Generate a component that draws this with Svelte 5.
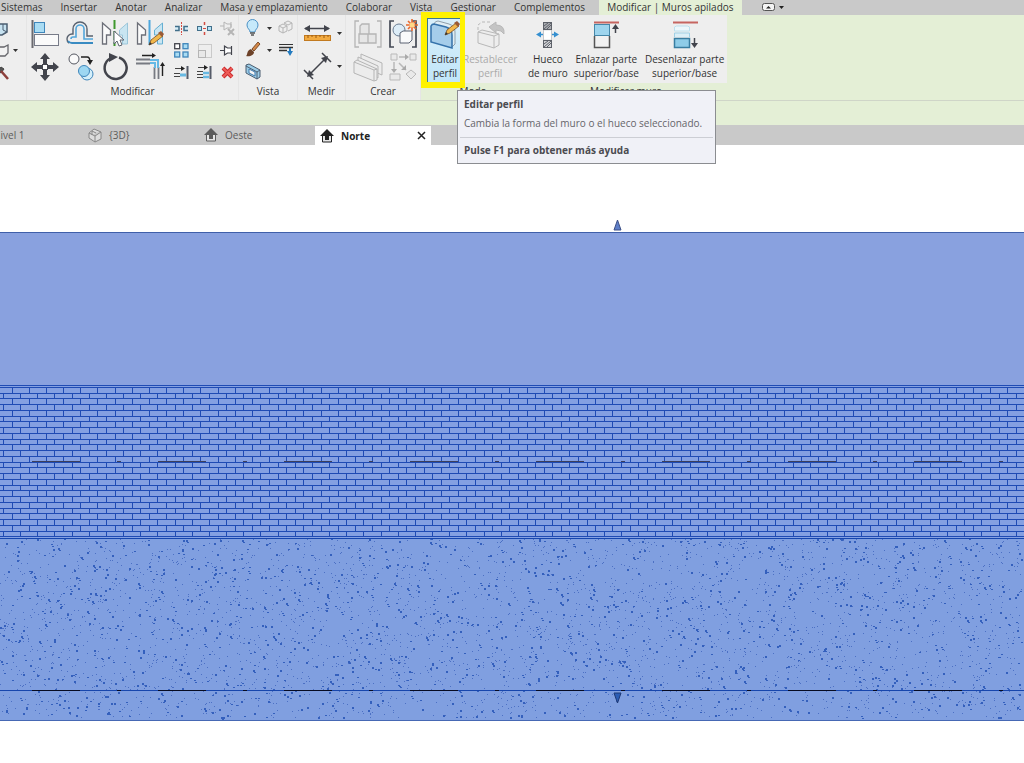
<script lang="ts">
  interface Tool {
    icon: string;
    label: string;
    disabled?: boolean;
  }

  const menuTabs = [
    'Sistemas',
    'Insertar',
    'Anotar',
    'Analizar',
    'Masa y emplazamiento',
    'Colaborar',
    'Vista',
    'Gestionar',
    'Complementos',
  ];

  const modifyLarge: Tool[] = [
    { icon: 'align', label: 'Alinear' },
    { icon: 'offset', label: 'Desfase' },
    { icon: 'mirrorPick', label: 'Reflejar - Seleccionar eje' },
    { icon: 'mirrorDraw', label: 'Reflejar - Dibujar eje' },
    { icon: 'move', label: 'Desplazar' },
    { icon: 'copy', label: 'Copiar' },
    { icon: 'rotate', label: 'Rotar' },
    { icon: 'trim', label: 'Recortar esquina' },
  ];

  const modifySmall: Tool[] = [
    { icon: 'split', label: 'Dividir elemento' },
    { icon: 'splitGap', label: 'Dividir con separación' },
    { icon: 'unpin', label: 'Desbloquear', disabled: true },
    { icon: 'array', label: 'Matriz' },
    { icon: 'scale', label: 'Escala', disabled: true },
    { icon: 'pin', label: 'Bloquear' },
    { icon: 'extend', label: 'Alargar elemento' },
    { icon: 'extendMany', label: 'Alargar varios' },
    { icon: 'remove', label: 'Suprimir' },
  ];

  const createTools: Tool[] = [
    { icon: 'assembly', label: 'Crear montaje', disabled: true },
    { icon: 'group', label: 'Crear grupo' },
    { icon: 'parts', label: 'Crear piezas', disabled: true },
    { icon: 'similar', label: 'Crear similar', disabled: true },
  ];

  const viewTabs = [
    { icon: 'plan', label: 'Nivel 1' },
    { icon: 'cube', label: '{3D}' },
    { icon: 'house', label: 'Oeste' },
    { icon: 'house', label: 'Norte', active: true },
  ];

  const dark = '#42444c';
  const blue = '#3f86bb';
  const sky = '#a9dcf3';
  const pale = '#b5b5b5';
  const pencil = (x: number, y: number) =>
    `<g transform="translate(${x} ${y})"><path d="M0 11l2-5 9-7 3 3-9 7z" fill="#f2b84b" stroke="#7a4d20" stroke-width=".8"/><path d="M9-1l3-2 3 3-2 3z" fill="#9a5a35"/><path d="M0 11l1-3 2 2z" fill="#333"/></g>`;

  const icons: Record<string, string> = {
    align: `<path d="M1.500 0v28" stroke="#6a6a70" stroke-width="2"/><rect x="3.500" y="2.500" width="10" height="10" fill="${sky}" stroke="${blue}"/><rect x="3.500" y="14.500" width="24" height="11" fill="#fafafa" stroke="#777b88"/>`,
    offset: `<g fill="none"><path d="M27 16h-6V9a7 7 0 00-14 0v5H6a5 5 0 00-5 5q0 3 2 4" stroke="#58616e" stroke-width="1.400"/><path d="M27 19h-9V9a4 4 0 00-8 0v8H7a2 2 0 00-2 2" stroke="#53a6da" stroke-width="1.600"/><path d="M27 23H6a5 5 0 01-4-2" stroke="#398bc2" stroke-width="1.800"/></g>`,
    mirrorPick: `<path d="M1.500 3v21h4v-9h4V10z" fill="#fafafa" stroke="#6c6f78" stroke-width="1.300"/><path d="M26.500 3v21h-5v-9h-3v-5z" fill="#c9e5f1" stroke="#9bc5d9"/><path d="M13.500 0v26" stroke="#3f982d" stroke-width="2" stroke-dasharray="9 2"/><path d="M13 11v13l3-3 2 5 3-1-2-5h4z" fill="#fff" stroke="#5d6470"/>`,
    mirrorDraw: `<path d="M1.500 3v21h4v-9h4V10z" fill="#fafafa" stroke="#6c6f78" stroke-width="1.300"/><path d="M26.500 3v21h-5v-9h-3v-5z" fill="#c9e5f1" stroke="#65afd2"/><path d="M13.500 0v25" stroke="#4da7dd" stroke-width="2"/>${pencil(13, 14)}`,
    move: `<path d="M14 0l5 6h-3v5h-4V6H9zM14 28l5-6h-3v-5h-4v5H9zM0 14l6-5v3h5v4H6v3zM28 14l-6-5v3h-5v4h5v3z" fill="${dark}"/><rect x="11.500" y="11.500" width="5" height="5" fill="#fff" stroke="${dark}"/>`,
    copy: `<circle cx="8" cy="6" r="5" fill="#fafafa" stroke="#555862"/><path d="M15 4h6q3 0 3 5" fill="none" stroke="#222" stroke-width="1.500"/><path d="M21 7l3 5 3-5z" fill="#222"/><circle cx="21" cy="21" r="6" fill="#d5effa" stroke="${blue}"/><circle cx="18" cy="18" r="5.500" fill="#9dd7f2" stroke="${blue}"/>`,
    rotate: `<path d="M18 4.500a11 11 0 11-9 1" fill="none" stroke="${dark}" stroke-width="2.500"/><path d="M8 0l9 4-9 5z" fill="${dark}"/>`,
    trim: `<g fill="none"><path d="M0 6.500h14M0 10.500h14M18.500 14v12M22.500 14v12" stroke="#777a82" stroke-width="1.800"/><path d="M14 7h8v8M14 10h5v5" stroke="#65b9e5" stroke-width="2"/><path d="M6 2.500h12M26.500 23V12" stroke="#222" stroke-width="1.400"/></g><path d="M16 0l4 2.500L16 5zM24 13l2.500-4 2.500 4z" fill="#222"/>`,
    split: `<path d="M7.500 1v13" stroke="#d34b42" stroke-dasharray="2 1"/><path d="M1 5.500h4v4H1M14 5.500h-4v4h4" fill="#d7eef8" stroke="#426f8a" stroke-width="1.500"/>`,
    splitGap: `<path d="M7.500 1v3M7.500 11v3" stroke="#d34b42" stroke-width="1.500"/><rect x=".5" y="5.500" width="4" height="4" fill="#b5e2f5" stroke="#426f8a"/><rect x="10.500" y="5.500" width="4" height="4" fill="#b5e2f5" stroke="#426f8a"/><path d="M6 7.500h3" stroke="#d34b42"/>`,
    unpin: `<g stroke="${pale}" fill="none"><path d="M0 5h4M4 1v8l3-2h4V3H7zM11 1v5"/><path d="M8 8l6 6M14 8l-6 6" stroke-width="2"/></g>`,
    pin: `<path d="M0 7.500h4M4.500 3v9l3-2h4V5h-4zM11.500 3v9" fill="#fff" stroke="${dark}" stroke-width="1.200"/>`,
    array: `<g stroke-width="1.300"><rect x=".7" y=".7" width="5" height="5" fill="#fff" stroke="${dark}"/><rect x="9" y=".7" width="5" height="5" fill="${sky}" stroke="${blue}"/><rect x=".7" y="9" width="5" height="5" fill="${sky}" stroke="${blue}"/><rect x="9" y="9" width="5" height="5" fill="${sky}" stroke="${blue}"/></g>`,
    scale: `<rect x="1.500" y="1.500" width="13" height="13" fill="none" stroke="#cacaca"/><rect x="1.500" y="7.500" width="7" height="7" fill="#e8e8e8" stroke="${pale}"/>`,
    extend: `<path d="M13.500 1v13" stroke="#555b68" stroke-width="2"/><path d="M1 3.500h8M0 8.500h6M0 11.500h6" stroke="#444" stroke-width="1.200"/><path d="M7 1l4 2.500L7 6z" fill="#222"/><path d="M6 10h6" stroke="#67b9e3" stroke-width="3"/>`,
    extendMany: `<path d="M13.500 1v13" stroke="#555b68" stroke-width="2"/><path d="M1 2.500h8M0 6.500h6M0 9.500h6M0 12.500h6" stroke="#444" stroke-width="1.200"/><path d="M7 0l4 2.500L7 5z" fill="#222"/><path d="M6 8h6M6 12h6" stroke="#67b9e3" stroke-width="2.500"/>`,
    remove: `<path d="M3 3l9 9M12 3l-9 9" stroke="#c92b2e" stroke-width="4"/><path d="M3 3l9 9M12 3l-9 9" stroke="#ee5b57" stroke-width="2"/>`,
    bulb: `<path d="M5 12c0-3-3-3-3-7a5 5 0 0111 0c0 4-3 4-3 7z" fill="#c6e9fa" stroke="#4b91c6"/><path d="M5 13h5M6 15h3" stroke="#555" stroke-width="1.600"/>`,
    ghost: `<g fill="none" stroke="${pale}"><path d="M1 6l4-2 4 2v5l-4 2-4-2zM1 6l4 2 4-2M5 8v5M6 3l4-2 4 2v6l-4 2M6 3l4 2 4-2"/></g>`,
    brush: `<path d="M7 7l6-7 2 2-6 7z" fill="#d48747" stroke="#7a4d2b"/><path d="M1 14c2-1 0-5 5-7l3 3c0 3-4 5-8 4z" fill="#6d4229"/>`,
    thin: `<path d="M1 2.500h14" stroke="#333"/><path d="M1 5.500h14M1 8.500h8" stroke="#333" stroke-width="1.600"/><path d="M9 9h6l-3 5zM11 6h2v4h-2z" fill="#247bbf"/>`,
    section: `<path d="M1 1l3-1 11 6v7l-3 2L1 9z" fill="#9bcce7" stroke="#4b5d70"/><path d="M1 2l11 6v7M12 8l3-2" fill="none" stroke="#4b5d70"/><path d="M4 5l6 3v4L4 9z" fill="#f6f6f6" stroke="#3d78ab"/>`,
    ruler: `<path d="M2 8.500h24" stroke="${dark}" stroke-width="1.500"/><path d="M7 5v7L1 8.500zM21 5v7l6-3.500z" fill="${dark}"/><rect x="1.500" y="15.500" width="26" height="5" fill="#f3ab40" stroke="#c27a20"/><path d="M5 15v3M9 15v2M13 15v3M17 15v2M21 15v3M25 15v2" stroke="#9a5a12"/>`,
    dimension: `<path d="M6 22L23 5M1 17l9 9M19 0l9 9" stroke="${dark}" stroke-width="1.500"/><path d="M4 24l2-7 5 5zM25 3l-7 2 5 5z" fill="${dark}"/>`,
    assembly: `<g fill="none" stroke="${pale}" stroke-width="1.300"><path d="M5 1H1v26h4M23 1h4v26h-4"/><path d="M5 14h9v9H5zM14 14h8v9h-8zM6 14V6l2-2h7v10z" fill="#e6e6e6"/></g>`,
    group: `<path d="M5 1H1v26h4M23 1h4v26h-4" fill="none" stroke="#444955" stroke-width="1.700"/><circle cx="10" cy="10" r="6" fill="#dcecf7" stroke="#697b91"/><path d="M11 13l3-2h9v9l-3 3h-9z" fill="#f9fafb" stroke="#5a6272"/><path d="M23-1v12M17 5h12M19 1l8 8M27 1l-8 8" stroke="#e8682d" stroke-width="1.600"/><circle cx="23" cy="5" r="2.500" fill="#ffd987"/>`,
    parts: `<g fill="#ececec" stroke="${pale}"><path d="M7 1l21 9v12L7 13z"/><path d="M4 4l20 9v12L4 17z"/><path d="M0 9l3-2 20 9v11l-3 1L0 20z"/><path d="M0 9l20 8v11M20 17l3-1" fill="none"/></g>`,
    similar: `<g fill="#e9e9e9" stroke="#b9b9b9"><path d="M2 1h6v6H2zM21 1h6v6h-6zM1 21h10v6H1zM22 17l5 4-5 5-5-5z"/><path d="M10 4h8M5 9v9M10 10l7 7" fill="none" stroke-width="1.500"/></g><path d="M16 1l4 3-4 3M2 16l3 4 3-4M17 12v5h-5" fill="#aaa"/>`,
    editProfile: `<path d="M3 3q1-3 4-3l11 3q6 2 6 8v12l-3 3L3 20z" fill="#dfeef5" stroke="#8e9eaa"/><path d="M0 5q1-2 3-2l12 3q6 2 6 8v13L0 21z" fill="#a5cdea" stroke="#3472ab" stroke-width="1.500"/>${pencil(14, 3)}`,
    resetProfile: `<g fill="#ededed" stroke="#b8b8b8"><path d="M2 11l4-2 17 4v11l-5 3L2 22z"/><path d="M2 11l16 4v12M18 15l5-2" fill="none"/><path d="M2 9V4l4-3h10" fill="none" stroke-dasharray="3 2"/><path d="M13 6l7-5v3q9 0 8 9-2-4-8-4v3z" fill="#c4c4c4"/></g>`,
    opening: `<g stroke="#5d6169"><rect x="9.500" y="1.500" width="8" height="7" fill="#a9abb0"/><rect x="9.500" y="19.500" width="8" height="7" fill="#d2d3d6"/><path d="M10 8l7-6M10 5l4-3M13 8l4-4M10 26l7-6M10 23l4-3M13 26l4-4"/></g><path d="M9.500 9v10M17.500 9v10" stroke="#c5c7ca"/><rect x="10" y="10" width="7" height="8" fill="#fff"/><path d="M5 13.500h4M18 13.500h4" stroke="#348fd0" stroke-width="1.500"/><path d="M2 13.500l5-3v6zM25 13.500l-5-3v6z" fill="#348fd0"/>`,
    attach: `<path d="M2 1.500h25" stroke="#c66560" stroke-width="2"/><rect x="2.500" y="3.500" width="15" height="11" fill="#9ed5ee" stroke="#4587a9"/><path d="M2.500 15v11.500h15V15" fill="#f1f1f1" stroke="#555" stroke-width="1.500"/><path d="M23.500 12V6" stroke="${dark}" stroke-width="1.500"/><path d="M20 8l3.500-5L27 8z" fill="${dark}"/>`,
    detach: `<path d="M2 1.500h25" stroke="#c66560" stroke-width="2"/><path d="M3.500 10V6l2-1h11l2 1v4z" fill="#edf7fb" stroke="#bde0ee"/><path d="M3.500 16v-4h15v4" fill="#dceff7" stroke="#9fd0e5"/><rect x="3.500" y="17.500" width="15" height="9" fill="#8ecce8" stroke="#387da1" stroke-width="1.500"/><path d="M23.500 17v7" stroke="${dark}" stroke-width="1.500"/><path d="M20 22l3.500 5 3.500-5z" fill="${dark}"/>`,
    house: `<path d="M7 0l7 7H0z" fill="currentColor"/><path d="M2.500 7v6h9V7" fill="#e6e6e6" stroke="currentColor"/><path d="M5 7h4v4H5z" fill="currentColor"/>`,
    cube: `<path d="M1 5l5-4 7 3v7l-6 3-6-4zM1 5l6 3 6-4M7 8v6M4 7V3l4 2" fill="#ddd" stroke="#888"/>`,
    plan: `<path d="M1.500 1.500h11v11h-11zM6 2v6h6" fill="none" stroke="#888"/>`,
    clipTop: `<path d="M1 3h12v8l-5 3H1z" fill="#c7e2f0" stroke="#4b5d70" stroke-width="1.500"/><path d="M9 3v6l4 2" fill="none" stroke="#4b5d70"/>`,
    clipMid: `<path d="M1 4h9l4-2v8l-3 3H1z" fill="#f2f2f2" stroke="#65666b" stroke-width="1.300"/>`,
    clipHammer: `<path d="M4 6l3-4 3 2-3 4z" fill="#555" stroke="#444"/><path d="M7 6l7 8" stroke="#8d3f3b" stroke-width="2.500"/>`,
  };

  // Six bricks per tile; joints snap to whole pixels.
  const tileWidth = 103;
  const courses = 26;

  function brickPath(): string {
    let d = `M0 .5H${tileWidth}`;
    for (let row = 0; row <= courses; row++) {
      const top = Math.round(2 + row * 5.74);
      const bottom = Math.round(2 + (row + 1) * 5.74);
      d += `M0 ${top}.5H${tileWidth}`;
      if (row === courses) continue;
      for (let i = 0; i < 6; i++) {
        const x = Math.round(3 + i * 17.16 + (row % 2 ? 0 : 8.5));
        d += `M${x}.5 ${top}V${bottom}`;
      }
    }
    return d;
  }

  function speckles(count: number, large: boolean): string {
    let seed = large ? 7919 : 104729;
    const next = () => {
      seed = (seed * 1664525 + 1013904223) % 4294967296;
      return seed / 4294967296;
    };
    let d = '';
    for (let i = 0; i < count; i++) {
      const x = Math.floor(next() * 1022);
      const y = Math.floor(next() * 180);
      const w = large ? 2 : 1;
      const h = large && next() > 0.4 ? 2 : 1;
      d += `M${x} ${y}h${w}v${h}h-${w}z`;
      if (large && next() > 0.9) d += `M${x + 1} ${y + 2}h2v1h-2z`;
    }
    return d;
  }

  const bricks = brickPath();
  const fineGrain = speckles(3200, false);
  const coarseGrain = speckles(1350, true);
</script>

{#snippet icon(name: string, size: number)}
  <svg class="icon" width={size} height={size} viewBox="0 0 {size} {size}" fill="none" aria-hidden="true">
    {@html icons[name]}
  </svg>
{/snippet}

{#snippet tool(item: Tool, size: number)}
  <button class="tool" aria-label={item.label} disabled={item.disabled}>
    {@render icon(item.icon, size)}
  </button>
{/snippet}

{#snippet arrow(label: string)}
  <button class="tool" aria-label={label}>
    <svg class="icon" width="5" height="3"><path d="M0 0h5L2.500 3z" fill="#333" /></svg>
  </button>
{/snippet}

<div class="app">
  <nav class="menu">
    {#each menuTabs as tab}
      <button class="menu-tab">{tab}</button>
    {/each}
    <button class="menu-tab current">Modificar | Muros apilados</button>
    <button class="minimize" aria-label="Minimizar cinta">
      <svg class="icon" width="22" height="9" viewBox="0 0 22 9">
        <rect x=".5" y=".5" width="12" height="7" rx="2" fill="#f4f4f4" stroke="#555" />
        <path d="M4 5.500L6.500 3 9 5.500zM17 3h5l-2.500 3z" fill="#222" />
      </svg>
    </button>
  </nav>

  <div class="ribbon">
    <section class="panel clipboard">
      <div class="tools">
        {@render tool({ icon: 'clipTop', label: 'Geometría' }, 15)}
        <span></span>
        {@render tool({ icon: 'clipMid', label: 'Cortar' }, 15)}
        {@render arrow('Opciones de corte')}
        {@render tool({ icon: 'clipHammer', label: 'Demoler' }, 15)}
      </div>
    </section>

    <section class="panel">
      <div class="tools modify">
        <div class="large-grid">
          {#each modifyLarge as item}{@render tool(item, 28)}{/each}
        </div>
        <div class="small-grid">
          {#each modifySmall as item}{@render tool(item, 15)}{/each}
        </div>
      </div>
      <h2>Modificar</h2>
    </section>

    <section class="panel">
      <div class="tools view-grid">
        {@render tool({ icon: 'bulb', label: 'Ocultar en vista' }, 16)}
        {@render arrow('Opciones de ocultar')}
        {@render tool({ icon: 'ghost', label: 'Desplazar elementos', disabled: true }, 16)}
        {@render tool({ icon: 'brush', label: 'Modificar gráficos' }, 16)}
        {@render arrow('Opciones de gráficos')}
        {@render tool({ icon: 'thin', label: 'Estilo de línea' }, 16)}
        {@render tool({ icon: 'section', label: 'Cuadro de selección' }, 16)}
      </div>
      <h2>Vista</h2>
    </section>

    <section class="panel">
      <div class="tools measure">
        {@render tool({ icon: 'ruler', label: 'Medir' }, 28)}
        {@render arrow('Opciones de medición')}
        {@render tool({ icon: 'dimension', label: 'Cota' }, 28)}
        {@render arrow('Opciones de cota')}
      </div>
      <h2>Medir</h2>
    </section>

    <section class="panel">
      <div class="tools create">
        {#each createTools as item}{@render tool(item, 28)}{/each}
      </div>
      <h2>Crear</h2>
    </section>

    <section class="panel context mode">
      <div class="tools">
        <div class="edit-slot">
          <button class="command selected" aria-describedby="edit-tip">
            {@render icon('editProfile', 28)}
            <span>Editar<br />perfil</span>
          </button>
          <div class="highlight"></div>
          <div class="tooltip" role="tooltip" id="edit-tip">
            <strong>Editar perfil</strong>
            <p>Cambia la forma del muro o el hueco seleccionado.</p>
            <strong class="help">Pulse F1 para obtener más ayuda</strong>
          </div>
        </div>
        <button class="command" disabled>
          {@render icon('resetProfile', 28)}
          <span>Restablecer<br />perfil</span>
        </button>
      </div>
      <h2>Modo</h2>
    </section>

    <section class="panel context walls">
      <div class="tools">
        <button class="command">
          {@render icon('opening', 28)}
          <span>Hueco<br />de muro</span>
        </button>
        <button class="command">
          {@render icon('attach', 28)}
          <span>Enlazar parte<br />superior/base</span>
        </button>
        <button class="command">
          {@render icon('detach', 28)}
          <span>Desenlazar parte<br />superior/base</span>
        </button>
      </div>
      <h2>Modificar muro</h2>
    </section>
  </div>

  <div class="options"></div>

  <nav class="views">
    {#each viewTabs as view}
      <div class="view-tab" class:active={view.active}>
        <button class="view-name">
          {@render icon(view.icon, 14)}
          {view.label}
        </button>
        {#if view.active}
          <button class="close" aria-label="Cerrar vista">
            <svg class="icon" width="9" height="9"><path d="M1 1l7 7M8 1L1 8" stroke="#222" stroke-width="1.500" /></svg>
          </button>
        {/if}
      </div>
    {/each}
  </nav>

  <main class="canvas">
    <svg class="handle top" width="9" height="12"><path d="M4.500 1L8 11H1z" fill="#5e7fc8" stroke="#3c4f86" /></svg>
    <div class="layer plain"></div>
    <svg class="layer" width="100%" height="153">
      <defs>
        <pattern id="bricks" width={tileWidth} height="153" patternUnits="userSpaceOnUse">
          <path d={bricks} stroke="#1f4bb4" fill="none" shape-rendering="crispEdges" />
        </pattern>
        <pattern id="axis" x="32" width="126" height="153" patternUnits="userSpaceOnUse">
          <path d="M0 0h48v153H0zM85 0h4v153h-4z" fill="#3d405c" />
        </pattern>
      </defs>
      <rect width="100%" height="153" fill="#84a0e2" />
      <rect width="100%" height="153" fill="url(#bricks)" />
      <rect y="76" width="100%" height="1" fill="url(#axis)" />
    </svg>
    <svg class="layer" width="100%" height="183">
      <defs>
        <pattern id="concrete" width="1024" height="183" patternUnits="userSpaceOnUse">
          <path d={fineGrain} fill="#4c70c4" />
          <path d={coarseGrain} fill="#3460bd" />
        </pattern>
        <pattern id="base-axis" x="32" width="126" height="183" patternUnits="userSpaceOnUse">
          <path d="M0 0h48v183H0zM85 0h4v183h-4z" fill="#060b22" />
        </pattern>
      </defs>
      <rect width="100%" height="183" fill="#809fe0" />
      <rect width="100%" height="183" fill="url(#concrete)" />
      <rect width="100%" height="1" fill="#1746ad" />
      <rect y="152" width="100%" height="1" fill="#1746ad" />
      <rect y="152" width="100%" height="1" fill="url(#base-axis)" />
      <rect y="182" width="100%" height="1" fill="#4668b4" />
    </svg>
    <svg class="handle bottom" width="9" height="12"><path d="M1 1h7L4.500 11z" fill="#2b5db5" stroke="#1d3875" /></svg>
  </main>
</div>

<style>
  :global(body) {
    margin: 0;
    background: #fff;
  }

  .app {
    font-family: 'Open Sans', 'Noto Sans', sans-serif;
    font-size: 10px;
    color: #333;
    overflow: hidden;
  }

  button {
    margin: 0;
    padding: 0;
    border: 0;
    background: none;
    color: inherit;
    font: inherit;
    white-space: nowrap;
  }

  .icon {
    display: block;
    flex: none;
    overflow: visible;
  }

  .menu {
    display: flex;
    height: 15px;
    background: #c9c9c9;
    line-height: 14px;
  }

  .menu-tab {
    flex: none;
    padding: 0 9px 2px;
  }

  .menu-tab:first-child {
    padding-left: 1px;
  }

  .menu-tab.current {
    margin-left: 5px;
    padding: 0 8px 2px;
    background: #e4efd6;
  }

  .minimize {
    padding-left: 20px;
  }

  .ribbon {
    display: flex;
    height: 85px;
    background: #e4efd6;
    border-bottom: 1px solid #cfd5c8;
  }

  .panel {
    box-sizing: border-box;
    display: flex;
    flex-direction: column;
    flex: none;
    background: #eee;
    border-right: 1px solid #e5e5e5;
  }

  .tools {
    box-sizing: border-box;
    display: grid;
    height: 68px;
    padding-top: 2px;
  }

  .panel h2 {
    margin: 0;
    font-size: 10px;
    font-weight: 400;
    line-height: 16px;
    text-align: center;
  }

  .tool {
    display: grid;
    place-items: center;
  }

  .clipboard {
    width: 27px;
  }

  .clipboard .tools {
    grid-template: repeat(3, 22px) / 15px 12px;
    margin-left: -6px;
  }

  .modify {
    grid-template-columns: 140px 68px;
    column-gap: 3px;
  }

  .large-grid {
    display: grid;
    grid-template: repeat(2, 33px) / repeat(4, 35px);
  }

  .small-grid {
    display: grid;
    grid-template: repeat(3, 22px) / repeat(3, 23px);
  }

  .view-grid {
    grid-template: repeat(3, 22px) / 20px 12px 22px;
    padding-left: 4px;
  }

  .measure {
    grid-template: repeat(2, 33px) / 32px 12px;
    padding-left: 3px;
  }

  .create {
    grid-template: repeat(2, 33px) / repeat(2, 35px);
    padding-left: 4px;
  }

  .context {
    background: #e4efd6;
    border-right: 0;
  }

  .context .tools {
    display: flex;
    padding-top: 3px;
    background: #eee;
  }

  .mode {
    width: 104px;
  }

  .mode .tools {
    padding-left: 6px;
  }

  .walls {
    width: 202px;
  }

  .walls .tools {
    gap: 6px;
    padding-left: 3px;
  }

  .command {
    box-sizing: border-box;
    display: flex;
    flex-direction: column;
    align-items: center;
    height: 65px;
    padding-top: 3px;
    line-height: 14px;
    gap: 3px;
  }

  .command:disabled {
    color: #aaa;
  }

  .command.selected {
    width: 36px;
    padding-top: 2px;
    background: linear-gradient(#d9effa, #c0e5f9);
    border: 1px solid #3d7891;
  }

  .edit-slot {
    position: relative;
  }

  .highlight {
    position: absolute;
    z-index: 1;
    inset: -6px -2px -5px -6px;
    border: 6px solid #fff200;
    border-right-width: 5px;
  }

  .tooltip {
    position: absolute;
    z-index: 2;
    left: 30px;
    top: 72px;
    border: 1px solid #8b8d91;
    background: #f0f1f7;
    color: #4b4b50;
    line-height: 14px;
    padding: 6px 13px 6px 6px;
    white-space: nowrap;
  }

  .tooltip strong {
    display: block;
    font-weight: 700;
  }

  .tooltip p {
    margin: 5px 0 7px;
    color: #65656a;
  }

  .tooltip .help {
    margin: 0 -11px 0 -4px;
    padding: 5px 4px 0;
    border-top: 1px solid #ccced4;
  }

  .options {
    height: 24px;
    background: #e4efd6;
  }

  .views {
    display: flex;
    height: 20px;
    background: #c9c9c9;
    padding-left: 83px;
  }

  .view-tab {
    box-sizing: border-box;
    display: flex;
    flex: none;
    justify-content: space-between;
    width: 116px;
    padding: 0 5px;
    color: #5c5c5c;
  }

  .view-tab:first-child {
    margin-left: -116px;
  }

  .view-name {
    display: flex;
    align-items: center;
    gap: 7px;
  }

  .view-tab.active {
    margin-top: 1px;
    background: #fff;
    color: #222;
  }

  .active .view-name {
    font-weight: 700;
  }

  .close {
    display: grid;
    place-items: center;
  }

  .canvas {
    position: relative;
    padding-top: 87px;
    padding-bottom: 42px;
    background: #fff;
  }

  .layer {
    display: block;
  }

  .plain {
    box-sizing: border-box;
    height: 153px;
    background: #89a1df;
    border-top: 1px solid #3f5fa9;
  }

  .handle {
    position: absolute;
    left: 613px;
  }

  .top {
    top: 74px;
  }

  .bottom {
    top: 547px;
  }
</style>
